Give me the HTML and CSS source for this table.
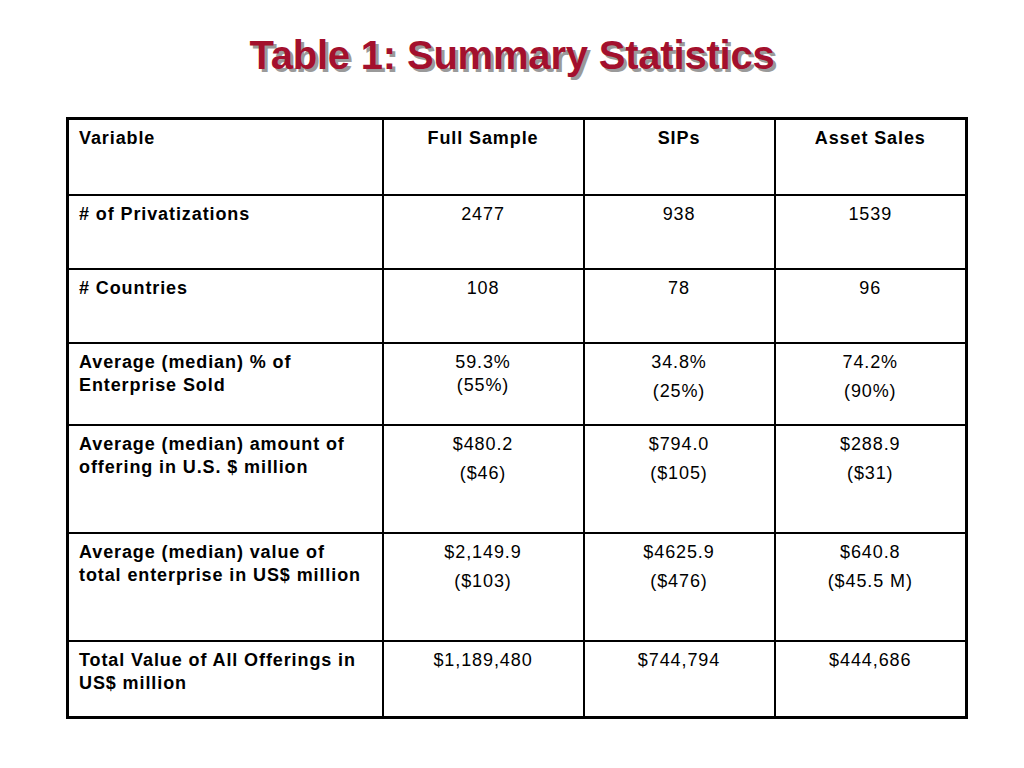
FILE: index.html
```html
<!DOCTYPE html>
<html>
<head>
<meta charset="utf-8">
<link rel="stylesheet" href="styles.css">
</head>
<body>
<div class="slide">
  <h1 class="title">Table 1: Summary Statistics</h1>
  <table class="stats">
    <colgroup>
      <col class="c-var">
      <col class="c-full">
      <col class="c-sips">
      <col class="c-asset">
    </colgroup>
    <tr class="r-head">
      <td class="label bold">Variable</td>
      <td class="num bold">Full Sample</td>
      <td class="num bold">SIPs</td>
      <td class="num bold">Asset Sales</td>
    </tr>
    <tr class="r-mid">
      <td class="label bold">#&nbsp;of Privatizations</td>
      <td class="num">2477</td>
      <td class="num">938</td>
      <td class="num">1539</td>
    </tr>
    <tr class="r-mid">
      <td class="label bold">#&nbsp;Countries</td>
      <td class="num">108</td>
      <td class="num">78</td>
      <td class="num">96</td>
    </tr>
    <tr class="r-pct">
      <td class="label bold">Average (median) % of<br>Enterprise Sold</td>
      <td class="num">59.3%<br>(55%)</td>
      <td class="num"><p>34.8%</p><p>(25%)</p></td>
      <td class="num"><p>74.2%</p><p>(90%)</p></td>
    </tr>
    <tr class="r-tall">
      <td class="label bold">Average (median) amount of<br>offering in U.S. $ million</td>
      <td class="num"><p>$480.2</p><p>($46)</p></td>
      <td class="num"><p>$794.0</p><p>($105)</p></td>
      <td class="num"><p>$288.9</p><p>($31)</p></td>
    </tr>
    <tr class="r-tall">
      <td class="label bold">Average (median) value of<br>total enterprise in US$ million</td>
      <td class="num"><p>$2,149.9</p><p>($103)</p></td>
      <td class="num"><p>$4625.9</p><p>($476)</p></td>
      <td class="num"><p>$640.8</p><p>($45.5 M)</p></td>
    </tr>
    <tr class="r-last">
      <td class="label bold">Total Value of All Offerings in<br>US$ million</td>
      <td class="num">$1,189,480</td>
      <td class="num">$744,794</td>
      <td class="num">$444,686</td>
    </tr>
  </table>
</div>
</body>
</html>
```

FILE: styles.css
```css
html, body {
  margin: 0;
  padding: 0;
  background: #ffffff;
}

.slide {
  width: 1024px;
  height: 768px;
  padding-top: 32px;
  box-sizing: border-box;
  font-family: "Liberation Sans", Arial, sans-serif;
  color: #000;
}

.title {
  margin: 0 0 39px 0;
  text-align: center;
  font-size: 40px;
  line-height: 46px;
  font-weight: bold;
  letter-spacing: -0.2px;
  color: #a3102d;
  text-shadow: 3px 3px 0 #9a9a9a;
}

.stats {
  margin-left: 66px;
  border-collapse: collapse;
  border: 3px solid #000;
  font-size: 18px;
  line-height: 23px;
  letter-spacing: 0.9px;
}

.c-var { width: 315px; }
.c-full { width: 201px; }
.c-sips { width: 191px; }
.c-asset { width: 192px; }

.stats td {
  border: 2px solid #000;
  vertical-align: top;
  padding: 7px 10px 5px 10px;
  box-sizing: border-box;
}

.stats .label {
  text-align: left;
}

.stats .num {
  text-align: center;
}

.bold {
  font-weight: bold;
}

.stats p {
  margin: 0 0 6px 0;
}

.r-head { height: 76px; }
.r-mid { height: 74px; }
.r-pct { height: 82px; }
.r-tall { height: 108px; }
.r-last { height: 77px; }
```
